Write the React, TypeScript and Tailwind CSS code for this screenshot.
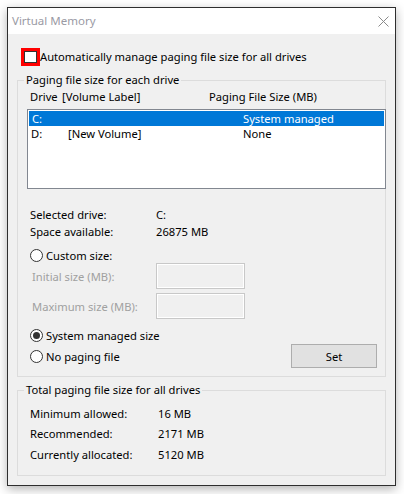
import React from "react";

const font = { fontFamily: '"Noto Sans", "Segoe UI", sans-serif' };

function Radio({ checked }: { checked?: boolean }) {
  return (
    <span className="w-[13px] h-[13px] rounded-full border border-[#333333] bg-white flex items-center justify-center shrink-0">
      {checked && <span className="w-[7px] h-[7px] rounded-full bg-[#333333]" />}
    </span>
  );
}

export default function App() {
  return (
    <div className="w-[404px] h-[494px] bg-white pt-[7px] pl-[7px] text-[11.2px] leading-[15px] text-black" style={font}>
      <div className="w-[389px] h-[479px] border border-[#2e2e2e] flex flex-col shadow-[0_3px_10px_rgba(0,0,0,0.3)]">
        {/* title bar */}
        <div className="h-[26px] bg-white flex items-center justify-between pl-[4px] pr-[6px] shrink-0">
          <span className="text-[#9a9aa4] text-[11.5px] leading-[16px]">Virtual Memory</span>
          <svg width="11" height="11" viewBox="0 0 11 11" className="block">
            <path d="M0.5 0.5 L10.5 10.5 M10.5 0.5 L0.5 10.5" stroke="#8a8a8a" strokeWidth="1" fill="none" />
          </svg>
        </div>
        {/* body */}
        <div className="flex-1 bg-[#f0f0f0] px-[9px] pt-[14px]">
          <div className="flex items-center h-[18px] ml-[4px]">
            <span className="w-[19px] h-[18px] border-[3px] border-[#ff0000] bg-white flex items-center justify-center shrink-0">
              <span className="w-[13px] h-[12px] border border-[#333333] bg-white" />
            </span>
            <span className="leading-[16px]">Automatically manage paging file size for all drives</span>
          </div>

          <fieldset className="mt-[6px] border border-[#dcdcdc] p-0 m-0 min-w-0">
            <legend className="ml-[6px] px-[2px] leading-[16px]">Paging file size for each drive</legend>
            <div className="pl-[12px] pr-[8px] pb-[8px]">
              <div className="flex h-[16px] mt-[1px] leading-[16px]">
                <span className="w-[32px]">Drive</span>
                <span className="w-[147px]">[Volume Label]</span>
                <span>Paging File Size (MB)</span>
              </div>
              <div className="mt-[4px] ml-[-3px] mr-[-9px] h-[80px] border border-[#828790] bg-white p-[1px]">
                <div className="flex h-[15px] items-center bg-[#0078d7] text-white pl-[3px]">
                  <span className="w-[36px]">C:</span>
                  <span className="w-[175px]"></span>
                  <span>System managed</span>
                </div>
                <div className="flex h-[15px] items-center pl-[2px]">
                  <span className="w-[37px]">D:</span>
                  <span className="w-[175px]">[New Volume]</span>
                  <span>None</span>
                </div>
              </div>

              <div className="mt-[17px] flex h-[17px] items-center">
                <span className="w-[126px]">Selected drive:</span>
                <span>C:</span>
              </div>
              <div className="flex h-[17px] items-center">
                <span className="w-[126px]">Space available:</span>
                <span>26875 MB</span>
              </div>

              <div className="mt-[8px] flex h-[15px] items-center gap-[3px]">
                <Radio />
                <span>Custom size:</span>
              </div>
              <div className="flex h-[26px] items-center">
                <span className="w-[126px] pl-[2px] text-[#a0a0a0]">Initial size (MB):</span>
                <span className="w-[89px] h-[26px] border border-[#c8c8c8] shadow-[inset_0_0_0_1px_#ffffff]" />
              </div>
              <div className="mt-[4px] flex h-[26px] items-center">
                <span className="w-[126px] pl-[2px] text-[#a0a0a0]">Maximum size (MB):</span>
                <span className="w-[89px] h-[26px] border border-[#c8c8c8] shadow-[inset_0_0_0_1px_#ffffff]" />
              </div>

              <div className="mt-[8px] flex h-[16px] items-center gap-[3px]">
                <Radio checked />
                <span>System managed size</span>
              </div>
              <div className="mt-[1px] flex h-[24px] items-center justify-between">
                <div className="flex items-center gap-[3px]">
                  <Radio />
                  <span>No paging file</span>
                </div>
                <button className="w-[86px] h-[24px] bg-[#e1e1e1] border border-[#adadad] text-black">Set</button>
              </div>
            </div>
          </fieldset>

          <fieldset className="mt-[5px] border border-[#dcdcdc] p-0 m-0 min-w-0">
            <legend className="ml-[6px] px-[2px] leading-[16px]">Total paging file size for all drives</legend>
            <div className="pl-[12px] pr-[8px] pt-[5px] pb-[10px]">
              <div className="flex h-[20.5px] items-center">
                <span className="w-[128px]">Minimum allowed:</span>
                <span>16 MB</span>
              </div>
              <div className="flex h-[20.5px] items-center">
                <span className="w-[128px]">Recommended:</span>
                <span>2171 MB</span>
              </div>
              <div className="flex h-[20.5px] items-center">
                <span className="w-[128px]">Currently allocated:</span>
                <span>5120 MB</span>
              </div>
            </div>
          </fieldset>
        </div>
      </div>
    </div>
  );
}
